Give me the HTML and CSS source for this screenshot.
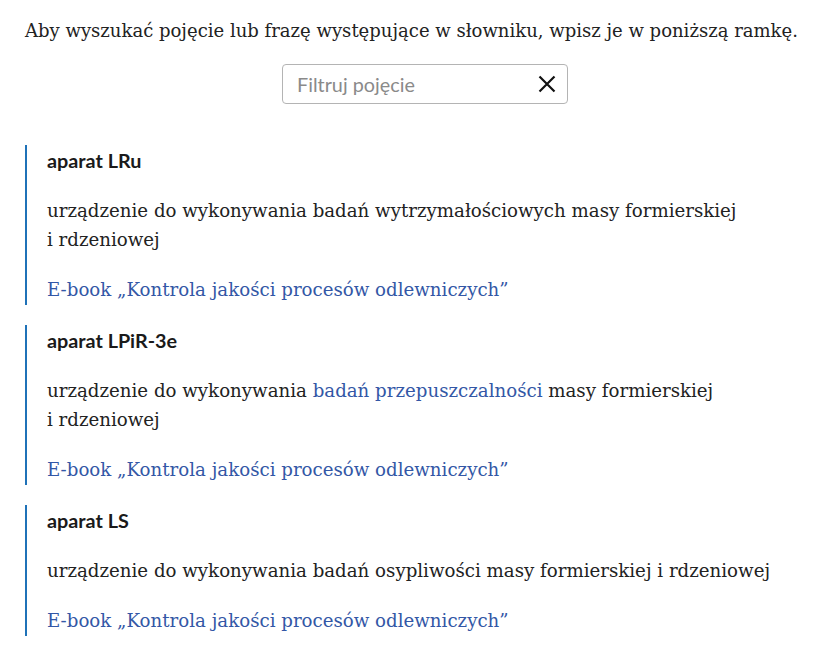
FILE: index.html
```html
<!DOCTYPE html>
<html lang="pl">
<head>
<meta charset="utf-8">
<title>Słownik</title>
<link rel="stylesheet" href="styles.css">
</head>
<body>
<main class="glossary">
  <p class="intro">Aby wyszukać pojęcie lub frazę występujące w słowniku, wpisz je w poniższą ramkę.</p>
  <div class="search-wrap">
    <label class="search">
      <input class="search-input" type="text" placeholder="Filtruj pojęcie">
      <span class="clear" aria-label="Wyczyść">
        <svg width="18" height="18" viewBox="0 0 18 18"><path d="M1.5 1.5 L16.5 16.5 M16.5 1.5 L1.5 16.5" stroke="#111" stroke-width="2.2" fill="none"/></svg>
      </span>
    </label>
  </div>
  <ul class="terms">
    <li class="term">
      <h3 class="term-title">aparat LRu</h3>
      <p class="term-desc">urządzenie do wykonywania badań wytrzymałościowych masy formierskiej i&nbsp;rdzeniowej</p>
      <a class="term-source" href="#">E-book „Kontrola jakości procesów odlewniczych”</a>
    </li>
    <li class="term">
      <h3 class="term-title">aparat LPiR-3e</h3>
      <p class="term-desc">urządzenie do wykonywania <a class="inline-link" href="#">badań przepuszczalności</a> masy formierskiej i&nbsp;rdzeniowej</p>
      <a class="term-source" href="#">E-book „Kontrola jakości procesów odlewniczych”</a>
    </li>
    <li class="term">
      <h3 class="term-title">aparat LS</h3>
      <p class="term-desc">urządzenie do wykonywania badań osypliwości masy formierskiej i&nbsp;rdzeniowej</p>
      <a class="term-source" href="#">E-book „Kontrola jakości procesów odlewniczych”</a>
    </li>
  </ul>
</main>
</body>
</html>
```
FILE: styles.css
```css
html, body {
  margin: 0;
  padding: 0;
  background: #ffffff;
}

.glossary {
  width: 800px;
  padding: 16px 12px 0 25px;
  font-family: "DejaVu Serif", "Liberation Serif", serif;
  font-size: 18.2px;
  color: #222222;
}

.intro {
  margin: 0;
  font-size: 18.05px;
  line-height: 30px;
}

.search-wrap {
  display: flex;
  justify-content: center;
  margin-top: 18px;
}

.search {
  display: flex;
  align-items: center;
  width: 286px;
  height: 40px;
  box-sizing: border-box;
  border: 1px solid #b4b4b4;
  border-radius: 4px;
  padding: 0 11px 0 14px;
}

.search-input {
  flex: 1;
  min-width: 0;
  border: 0;
  outline: none;
  padding: 0;
  font-family: "Lato", sans-serif;
  font-size: 19.8px;
  color: #222;
  background: transparent;
}

.search-input::placeholder {
  color: #8a8a8a;
}

.clear {
  display: flex;
  width: 18px;
  height: 18px;
}

.terms {
  list-style: none;
  margin: 41px 0 0;
  padding: 0;
  display: flex;
  flex-direction: column;
  gap: 20px;
}

.term {
  border-left: 2px solid #1f72b8;
  padding: 2px 0 1px 20px;
}

.term-title {
  margin: 0;
  font-family: "Lato", sans-serif;
  font-weight: 700;
  font-size: 19.8px;
  line-height: 27px;
  color: #1a1a1a;
}

.term-desc {
  margin: 22px 0 0;
  line-height: 29px;
}

.term-source {
  display: block;
  margin-top: 21px;
  line-height: 29px;
  color: #3357a6;
  text-decoration: none;
}

.inline-link {
  color: #3357a6;
  text-decoration: none;
}
```
